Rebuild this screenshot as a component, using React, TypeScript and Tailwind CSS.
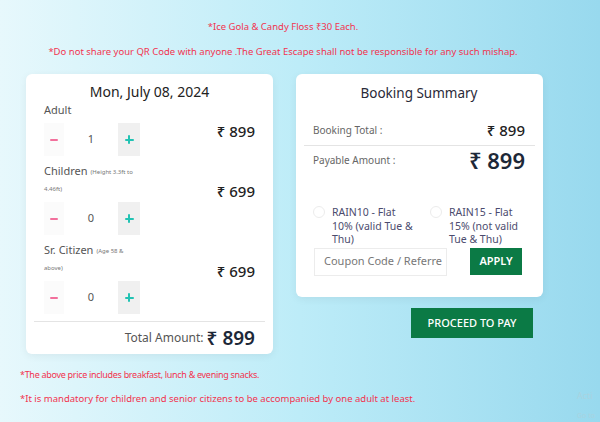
export default function App() {
  const redNote = "text-[9.5px] leading-[14px] text-[#f2334f] [font-family:Lato,'Liberation Sans',sans-serif]";
  const heading = "[font-family:Inter,'Liberation Sans',sans-serif]";
  const body = "[font-family:'Open Sans','Liberation Sans',sans-serif]";

  const Stepper = ({ value }: { value: number }) => (
    <div className="flex h-[33px] items-stretch">
      <div className="flex w-[20px] items-center justify-center bg-[#fbfbfb]">
        <div className="h-[2px] w-[8px] rounded bg-[#f2709c]" />
      </div>
      <div className={`flex w-[54px] items-center justify-center text-[11px] text-[#555] ${heading}`}>
        {value}
      </div>
      <div className="relative flex w-[22px] items-center justify-center bg-[#f0f0f0]">
        <div className="absolute h-[2px] w-[9px] rounded bg-[#22c3b3]" />
        <div className="absolute h-[9px] w-[2px] rounded bg-[#22c3b3]" />
      </div>
    </div>
  );

  const Group = ({
    label,
    sub,
    sub2,
    value,
    price,
    priceTop,
  }: {
    label: string;
    sub?: string;
    sub2?: string;
    value: number;
    price: string;
    priceTop: string;
  }) => (
    <div className="flex justify-between">
      <div className="flex flex-col">
        <div className={`flex h-[18px] items-center gap-[3px] whitespace-nowrap text-[11px] text-[#555] ${heading}`}>
          <span>{label}</span>
          {sub && <span className="mt-[2px] text-[6px] text-[#777]">{sub}</span>}
        </div>
        {sub2 && (
          <div className={`flex h-[18px] items-center text-[6px] text-[#777] ${heading}`}>{sub2}</div>
        )}
        <div className="mt-[4px]">
          <Stepper value={value} />
        </div>
      </div>
      <div className={`${priceTop} text-[15px] font-medium leading-[20px] text-[#222] ${heading}`}>{price}</div>
    </div>
  );

  return (
    <div className="relative h-[422px] w-[600px] overflow-hidden bg-gradient-to-r from-[#e7f8fc] via-[#bdecf8] to-[#98d9ee]">
      <div className="flex flex-col items-center pr-[34px] pt-[20px]">
        <p className={redNote}>*Ice Gola &amp; Candy Floss ₹30 Each.</p>
        <p className={`${redNote} mt-[11px]`}>
          *Do not share your QR Code with anyone .The Great Escape shall not be responsible for any such mishap.
        </p>
      </div>

      <div className="mt-[15px] flex items-start gap-[23px] pl-[26px]">
        {/* left card */}
        <div className="flex h-[280px] w-[247px] flex-col rounded-[6px] bg-white px-[18px] pt-[8px] shadow-[0_2px_8px_rgba(0,0,0,0.06)]">
          <div className={`h-[19px] text-center text-[14px] leading-[19px] text-[#222] ${heading}`}>Mon, July 08, 2024</div>
          <div className="flex flex-col gap-[6px]">
            <Group label="Adult" value={1} price="₹ 899" priceTop="mt-[20px]" />
            <Group label="Children" sub="(Height 3.3ft to" sub2="4.46ft)" value={0} price="₹ 699" priceTop="mt-[19px]" />
            <Group label="Sr. Citizen" sub="(Age 58 &" sub2="above)" value={0} price="₹ 699" priceTop="mt-[20px]" />
          </div>
          <div className="-mx-[10px] mt-[7px] h-px bg-[#e4e4e4]" />
          <div className={`flex h-[32px] items-center justify-end gap-[3px] ${heading}`}>
            <span className="text-[12px] text-[#555]">Total Amount:</span>
            <span className="text-[19px] font-semibold text-[#1d2838]">₹ 899</span>
          </div>
        </div>

        {/* right column */}
        <div className="flex flex-col items-end">
          <div className="flex h-[223px] w-[247px] flex-col rounded-[6px] bg-white pl-[17px] pr-[18px] pt-[8px] shadow-[0_2px_8px_rgba(0,0,0,0.06)]">
            <div className={`h-[22px] text-center text-[13.5px] leading-[22px] text-[#2a2a38] ${heading}`}>Booking Summary</div>
            <div className="mt-[11px] flex h-[30px] items-center justify-between">
              <span className={`text-[10px] text-[#666] ${body}`}>Booking Total :</span>
              <span className={`text-[15px] font-medium text-[#222] ${heading}`}>₹ 899</span>
            </div>
            <div className="-ml-[9px] -mr-[10px] h-px bg-[#e4e4e4]" />
            <div className="flex h-[28px] items-center justify-between">
              <span className={`text-[10px] text-[#666] ${body}`}>Payable Amount :</span>
              <span className={`text-[22px] font-semibold text-[#1d2838] ${heading}`}>₹ 899</span>
            </div>

            <div className={`mt-[32px] flex text-[10.5px] leading-[13.5px] text-[#4b4b6e] ${body}`}>
              <div className="flex w-[117px] items-start gap-[7px]">
                <div className="h-[12px] w-[12px] shrink-0 rounded-full border border-[#ececec]" />
                <div>
                  RAIN10 - Flat
                  <br />
                  10% (valid Tue &amp;
                  <br />
                  Thu)
                </div>
              </div>
              <div className="flex items-start gap-[7px]">
                <div className="h-[12px] w-[12px] shrink-0 rounded-full border border-[#ececec]" />
                <div>
                  RAIN15 - Flat
                  <br />
                  15% (not valid
                  <br />
                  Tue &amp; Thu)
                </div>
              </div>
            </div>

            <div className="mt-[1px] flex items-start">
              <div
                className={`ml-[1px] flex h-[28px] w-[133px] items-center overflow-hidden whitespace-nowrap border border-[#ececec] pl-[9px] text-[11px] text-[#777] ${body}`}
              >
                Coupon Code / Referre
              </div>
              <div
                className={`ml-[23px] flex h-[27px] w-[52px] items-center justify-center bg-[#0b7a45] text-[11px] font-semibold text-white ${body}`}
              >
                APPLY
              </div>
            </div>
          </div>
          <div
            className={`mr-[10px] mt-[11px] flex h-[30px] w-[122px] items-center justify-center bg-[#0b7a45] text-[11px] font-medium text-white ${body}`}
          >
            PROCEED TO PAY
          </div>
        </div>
      </div>

      <div className="mt-[14px] flex flex-col gap-[10px] pl-[20px]">
        <p className={`${redNote} text-[9px] tracking-[-0.3px]`}>*The above price includes breakfast, lunch &amp; evening snacks.</p>
        <p className={redNote}>*It is mandatory for children and senior citizens to be accompanied by one adult at least.</p>
      </div>

      <div className="absolute left-[577px] top-[386px] text-[9px] leading-[20px] text-[#a9d3e0] [font-family:'Liberation Sans',sans-serif]">
        <div>Acti</div>
        <div className="text-[7px]">Go to</div>
      </div>
    </div>
  );
}
